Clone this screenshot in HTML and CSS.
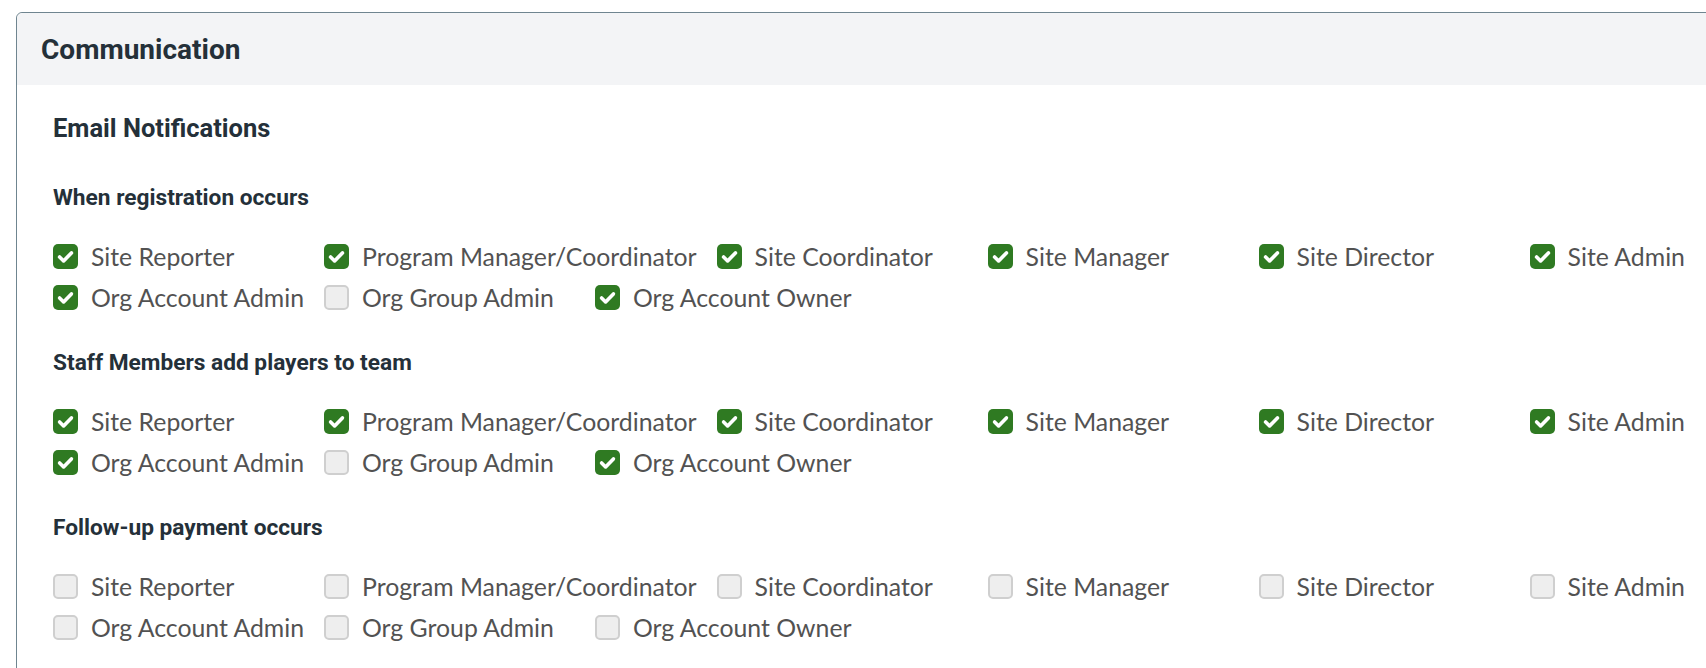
FILE: index.html
```html
<!DOCTYPE html>
<html lang="en">
<head>
<meta charset="utf-8">
<title>Communication</title>
<link rel="stylesheet" href="styles.css">
</head>
<body>
<div class="card">
  <div class="card-header"><h2 class="card-title">Communication</h2></div>
  <div class="card-body">
    <h3 class="group-title">Email Notifications</h3>

    <section class="event">
      <h4 class="event-title">When registration occurs</h4>
      <div class="options">
        <label class="opt"><span class="box on"><svg viewBox="0 0 25 25"><path d="M6.6 12.9 L10.6 16.9 L18.4 8.9"/></svg></span><span class="txt">Site Reporter</span></label>
        <label class="opt"><span class="box on"><svg viewBox="0 0 25 25"><path d="M6.6 12.9 L10.6 16.9 L18.4 8.9"/></svg></span><span class="txt">Program Manager/Coordinator</span></label>
        <label class="opt"><span class="box on"><svg viewBox="0 0 25 25"><path d="M6.6 12.9 L10.6 16.9 L18.4 8.9"/></svg></span><span class="txt">Site Coordinator</span></label>
        <label class="opt"><span class="box on"><svg viewBox="0 0 25 25"><path d="M6.6 12.9 L10.6 16.9 L18.4 8.9"/></svg></span><span class="txt">Site Manager</span></label>
        <label class="opt"><span class="box on"><svg viewBox="0 0 25 25"><path d="M6.6 12.9 L10.6 16.9 L18.4 8.9"/></svg></span><span class="txt">Site Director</span></label>
        <label class="opt"><span class="box on"><svg viewBox="0 0 25 25"><path d="M6.6 12.9 L10.6 16.9 L18.4 8.9"/></svg></span><span class="txt">Site Admin</span></label>
        <label class="opt"><span class="box on"><svg viewBox="0 0 25 25"><path d="M6.6 12.9 L10.6 16.9 L18.4 8.9"/></svg></span><span class="txt">Org Account Admin</span></label>
        <label class="opt"><span class="box"></span><span class="txt">Org Group Admin</span></label>
        <label class="opt"><span class="box on"><svg viewBox="0 0 25 25"><path d="M6.6 12.9 L10.6 16.9 L18.4 8.9"/></svg></span><span class="txt">Org Account Owner</span></label>
      </div>
    </section>

    <section class="event">
      <h4 class="event-title">Staff Members add players to team</h4>
      <div class="options">
        <label class="opt"><span class="box on"><svg viewBox="0 0 25 25"><path d="M6.6 12.9 L10.6 16.9 L18.4 8.9"/></svg></span><span class="txt">Site Reporter</span></label>
        <label class="opt"><span class="box on"><svg viewBox="0 0 25 25"><path d="M6.6 12.9 L10.6 16.9 L18.4 8.9"/></svg></span><span class="txt">Program Manager/Coordinator</span></label>
        <label class="opt"><span class="box on"><svg viewBox="0 0 25 25"><path d="M6.6 12.9 L10.6 16.9 L18.4 8.9"/></svg></span><span class="txt">Site Coordinator</span></label>
        <label class="opt"><span class="box on"><svg viewBox="0 0 25 25"><path d="M6.6 12.9 L10.6 16.9 L18.4 8.9"/></svg></span><span class="txt">Site Manager</span></label>
        <label class="opt"><span class="box on"><svg viewBox="0 0 25 25"><path d="M6.6 12.9 L10.6 16.9 L18.4 8.9"/></svg></span><span class="txt">Site Director</span></label>
        <label class="opt"><span class="box on"><svg viewBox="0 0 25 25"><path d="M6.6 12.9 L10.6 16.9 L18.4 8.9"/></svg></span><span class="txt">Site Admin</span></label>
        <label class="opt"><span class="box on"><svg viewBox="0 0 25 25"><path d="M6.6 12.9 L10.6 16.9 L18.4 8.9"/></svg></span><span class="txt">Org Account Admin</span></label>
        <label class="opt"><span class="box"></span><span class="txt">Org Group Admin</span></label>
        <label class="opt"><span class="box on"><svg viewBox="0 0 25 25"><path d="M6.6 12.9 L10.6 16.9 L18.4 8.9"/></svg></span><span class="txt">Org Account Owner</span></label>
      </div>
    </section>

    <section class="event">
      <h4 class="event-title">Follow-up payment occurs</h4>
      <div class="options">
        <label class="opt"><span class="box"></span><span class="txt">Site Reporter</span></label>
        <label class="opt"><span class="box"></span><span class="txt">Program Manager/Coordinator</span></label>
        <label class="opt"><span class="box"></span><span class="txt">Site Coordinator</span></label>
        <label class="opt"><span class="box"></span><span class="txt">Site Manager</span></label>
        <label class="opt"><span class="box"></span><span class="txt">Site Director</span></label>
        <label class="opt"><span class="box"></span><span class="txt">Site Admin</span></label>
        <label class="opt"><span class="box"></span><span class="txt">Org Account Admin</span></label>
        <label class="opt"><span class="box"></span><span class="txt">Org Group Admin</span></label>
        <label class="opt"><span class="box"></span><span class="txt">Org Account Owner</span></label>
      </div>
    </section>
  </div>
</div>
</body>
</html>
```

FILE: styles.css
```css
html, body {
  margin: 0;
  padding: 0;
  background: #ffffff;
  overflow: hidden;
}

body {
  font-family: "Lato", "Liberation Sans", sans-serif;
  color: #4f4f4f;
}

.card {
  width: 1900px;
  margin: 12px 0 0 16px;
  border: 1px solid #6f8590;
  border-radius: 6px;
  background: #ffffff;
}

.card-header {
  height: 72px;
  display: flex;
  align-items: center;
  padding: 1px 24px 0 24px;
  box-sizing: border-box;
  background: #f3f4f6;
  border-radius: 6px 6px 0 0;
}

.card-title {
  margin: 0;
  font-family: "Roboto", "Liberation Sans", sans-serif;
  font-weight: 700;
  font-size: 28px;
  line-height: 30px;
  color: #243039;
}

.card-body {
  padding: 28px 36px 40px 36px;
}

.group-title {
  margin: 0 0 40px 0;
  font-family: "Roboto", "Liberation Sans", sans-serif;
  font-weight: 700;
  font-size: 25.5px;
  line-height: 30px;
  color: #243039;
}

.event {
  margin-bottom: 30px;
}

.event-title {
  margin: 0 0 23px 0;
  font-family: "Roboto", "Liberation Sans", sans-serif;
  font-weight: 700;
  font-size: 22.7px;
  line-height: 30px;
  color: #243039;
}

.options {
  display: flex;
  flex-wrap: wrap;
  column-gap: 20px;
}

.opt {
  display: flex;
  align-items: center;
  gap: 13px;
  min-width: 251px;
  height: 41px;
  font-size: 24.8px;
  color: #525252;
  white-space: nowrap;
}

.box {
  width: 25px;
  height: 25px;
  box-sizing: border-box;
  border-radius: 5px;
  background: #eeeeee;
  border: 2px solid #cfcfcf;
  flex: none;
  display: flex;
}

.box.on {
  background: #2f7a22;
  border: none;
}

.box svg {
  width: 25px;
  height: 25px;
}

.box svg path {
  fill: none;
  stroke: #ffffff;
  stroke-width: 3.6;
  stroke-linecap: round;
  stroke-linejoin: round;
}
```
